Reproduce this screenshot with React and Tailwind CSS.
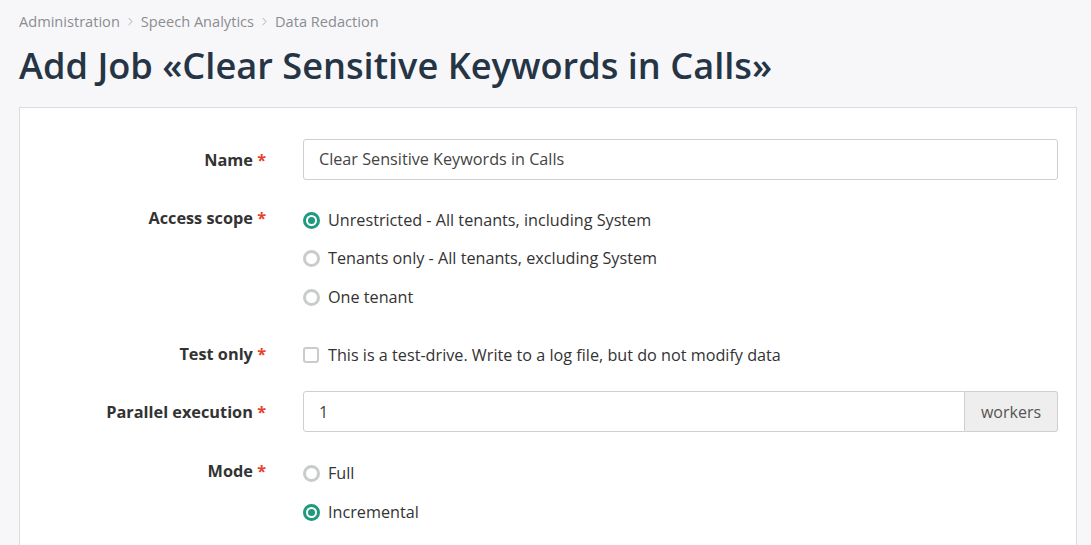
import React from "react";
import { ChevronRight } from "lucide-react";

function Label({ children }) {
    return (
        <div className="w-[246px] shrink-0 text-right font-bold text-[16.3px] text-[#333] leading-6">
            {children} <span className="text-[#e8412c]">*</span>
        </div>
    );
}

function Radio({ checked, label }) {
    return (
        <div className="flex items-center gap-[8px] h-6">
            {checked ? (
                <span className="w-[17px] h-[17px] rounded-full border-[3px] border-[#1f9a7e] bg-white flex items-center justify-center">
                    <span className="w-[7px] h-[7px] rounded-full bg-[#1f9a7e]" />
                </span>
            ) : (
                <span className="w-[17px] h-[17px] rounded-full border-[3px] border-[#c9cbcd] bg-white" />
            )}
            <span className="text-[16.2px] text-[#333]">{label}</span>
        </div>
    );
}

export default function App() {
    return (
        <div className="w-[1091px] h-[545px] overflow-hidden bg-[#f7f7f9] pl-[19px] pr-[14px]" style={{ fontFamily: '"Open Sans", sans-serif' }}>
            {/* Breadcrumbs */}
            <div className="flex items-center h-[43px] text-[14.6px] text-[#8a8d91]">
                <span>Administration</span>
                <ChevronRight className="w-[13px] h-[13px] mx-[4px] text-[#9a9da1]" strokeWidth={1.5} />
                <span>Speech Analytics</span>
                <ChevronRight className="w-[13px] h-[13px] mx-[4px] text-[#9a9da1]" strokeWidth={1.5} />
                <span>Data Redaction</span>
            </div>

            <h1 className="text-[36.2px] font-semibold text-[#253545] leading-[44px]">
                Add Job «Clear Sensitive Keywords in Calls»
            </h1>

            {/* Form panel */}
            <div className="mt-5 bg-white border border-[#dcdcdc] pt-[31px] pr-[18px] h-[500px]">
                {/* Name */}
                <div className="flex items-center gap-[37px]">
                    <Label>Name</Label>
                    <div className="flex-1 h-[41px] border border-[#cfcfcf] rounded-[3px] px-[15px] flex items-center text-[16.2px] text-[#444]">
                        Clear Sensitive Keywords in Calls
                    </div>
                </div>

                {/* Access scope */}
                <div className="flex gap-[37px] mt-[28px]">
                    <div className="-mt-[2px]"><Label>Access scope</Label></div>
                    <div className="flex flex-col gap-[14.5px]">
                        <Radio checked label="Unrestricted - All tenants, including System" />
                        <Radio label="Tenants only - All tenants, excluding System" />
                        <Radio label="One tenant" />
                    </div>
                </div>

                {/* Test only */}
                <div className="flex items-center gap-[37px] mt-[34px]">
                    <div className="-mt-[2px]"><Label>Test only</Label></div>
                    <div className="flex items-center gap-[9px] h-6">
                        <span className="w-4 h-4 rounded-[3px] border-2 border-[#c9cbcd] bg-white" />
                        <span className="text-[16.2px] text-[#333]">This is a test-drive. Write to a log file, but do not modify data</span>
                    </div>
                </div>

                {/* Parallel execution */}
                <div className="flex items-center gap-[37px] mt-[24px]">
                    <Label>Parallel execution</Label>
                    <div className="flex-1 flex h-[41px]">
                        <div className="flex-1 border border-[#cfcfcf] rounded-l-[3px] px-[15px] flex items-center text-[16px] text-[#444]">
                            1
                        </div>
                        <div className="w-[93px] border border-l-0 border-[#cfcfcf] rounded-r-[3px] bg-[#eeeeee] flex items-center justify-center text-[16px] text-[#555]">
                            workers
                        </div>
                    </div>
                </div>

                {/* Mode */}
                <div className="flex gap-[37px] mt-[29px]">
                    <div className="-mt-[2px]"><Label>Mode</Label></div>
                    <div className="flex flex-col gap-[15px]">
                        <Radio label="Full" />
                        <Radio checked label="Incremental" />
                    </div>
                </div>
            </div>
        </div>
    );
}
